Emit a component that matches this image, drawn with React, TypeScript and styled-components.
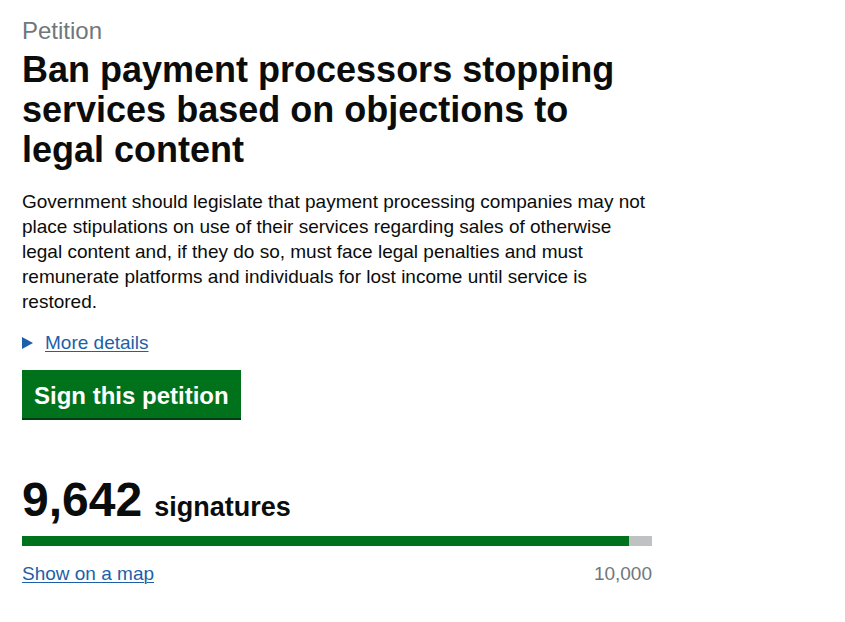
import React from "react";
import styled, { createGlobalStyle } from "styled-components";

const Global = createGlobalStyle`
  html, body { margin: 0; padding: 0; background: #ffffff; }
  body { font-family: "Liberation Sans", Arial, sans-serif; color: #0b0c0c; }
`;

const Page = styled.main`
  width: 630px;
  padding: 16px 22px 0;
  display: flex;
  flex-direction: column;
`;

const Caption = styled.div`
  font-size: 24px;
  line-height: 30px;
  color: #6f777b;
`;

const Title = styled.h1`
  margin: 4px 0 0;
  font-size: 36px;
  line-height: 40px;
  font-weight: 700;
  color: #0b0c0c;
`;

const Body = styled.p`
  margin: 19px 0 0;
  font-size: 19px;
  line-height: 25px;
`;

const Details = styled.div`
  margin-top: 16px;
  display: flex;
  align-items: center;
  gap: 12px;
  font-size: 19px;
  line-height: 25px;
`;

const Arrow = styled.span`
  width: 0;
  height: 0;
  border-top: 6px solid transparent;
  border-bottom: 6px solid transparent;
  border-left: 11px solid #1d5fa8;
`;

const Link = styled.a`
  color: #1d5fa8;
  text-decoration: underline;
  text-underline-offset: 2px;
  text-decoration-thickness: 1px;
  cursor: pointer;
`;

const Button = styled.button`
  align-self: flex-start;
  margin-top: 15px;
  height: 50px;
  padding: 3px 12px 0;
  border: none;
  border-bottom: 2px solid #003d10;
  background: #00721c;
  color: #ffffff;
  font-family: "Liberation Sans", Arial, sans-serif;
  font-size: 24px;
  font-weight: 700;
  line-height: 30px;
  cursor: pointer;
`;

const Count = styled.div`
  margin-top: 56px;
  display: flex;
  align-items: baseline;
  gap: 12px;
  font-weight: 700;
  line-height: 48px;
`;

const Number = styled.span`
  font-size: 48px;
`;

const Label = styled.span`
  font-size: 27px;
`;

const Track = styled.div`
  margin-top: 5px;
  height: 10px;
  background: #bfc1c3;
  display: flex;
`;

const Fill = styled.div`
  height: 100%;
  background: #00721c;
`;

const Footer = styled.div`
  margin-top: 15px;
  display: flex;
  justify-content: space-between;
  font-size: 19px;
  line-height: 25px;
`;

const Target = styled.span`
  color: #6f777b;
`;

export default function App() {
  const count = 9642;
  const goal = 10000;
  return (
    <>
      <Global />
      <Page>
        <Caption>Petition</Caption>
        <Title>Ban payment processors stopping services based on objections to legal content</Title>
        <Body>
          Government should legislate that payment processing companies may not place stipulations on use of their
          services regarding sales of otherwise legal content and, if they do so, must face legal penalties and must
          remunerate platforms and individuals for lost income until service is restored.
        </Body>
        <Details>
          <Arrow />
          <Link>More details</Link>
        </Details>
        <Button>Sign this petition</Button>
        <Count>
          <Number>9,642</Number>
          <Label>signatures</Label>
        </Count>
        <Track>
          <Fill style={{ width: `${(count / goal) * 100}%` }} />
        </Track>
        <Footer>
          <Link>Show on a map</Link>
          <Target>10,000</Target>
        </Footer>
      </Page>
    </>
  );
}
